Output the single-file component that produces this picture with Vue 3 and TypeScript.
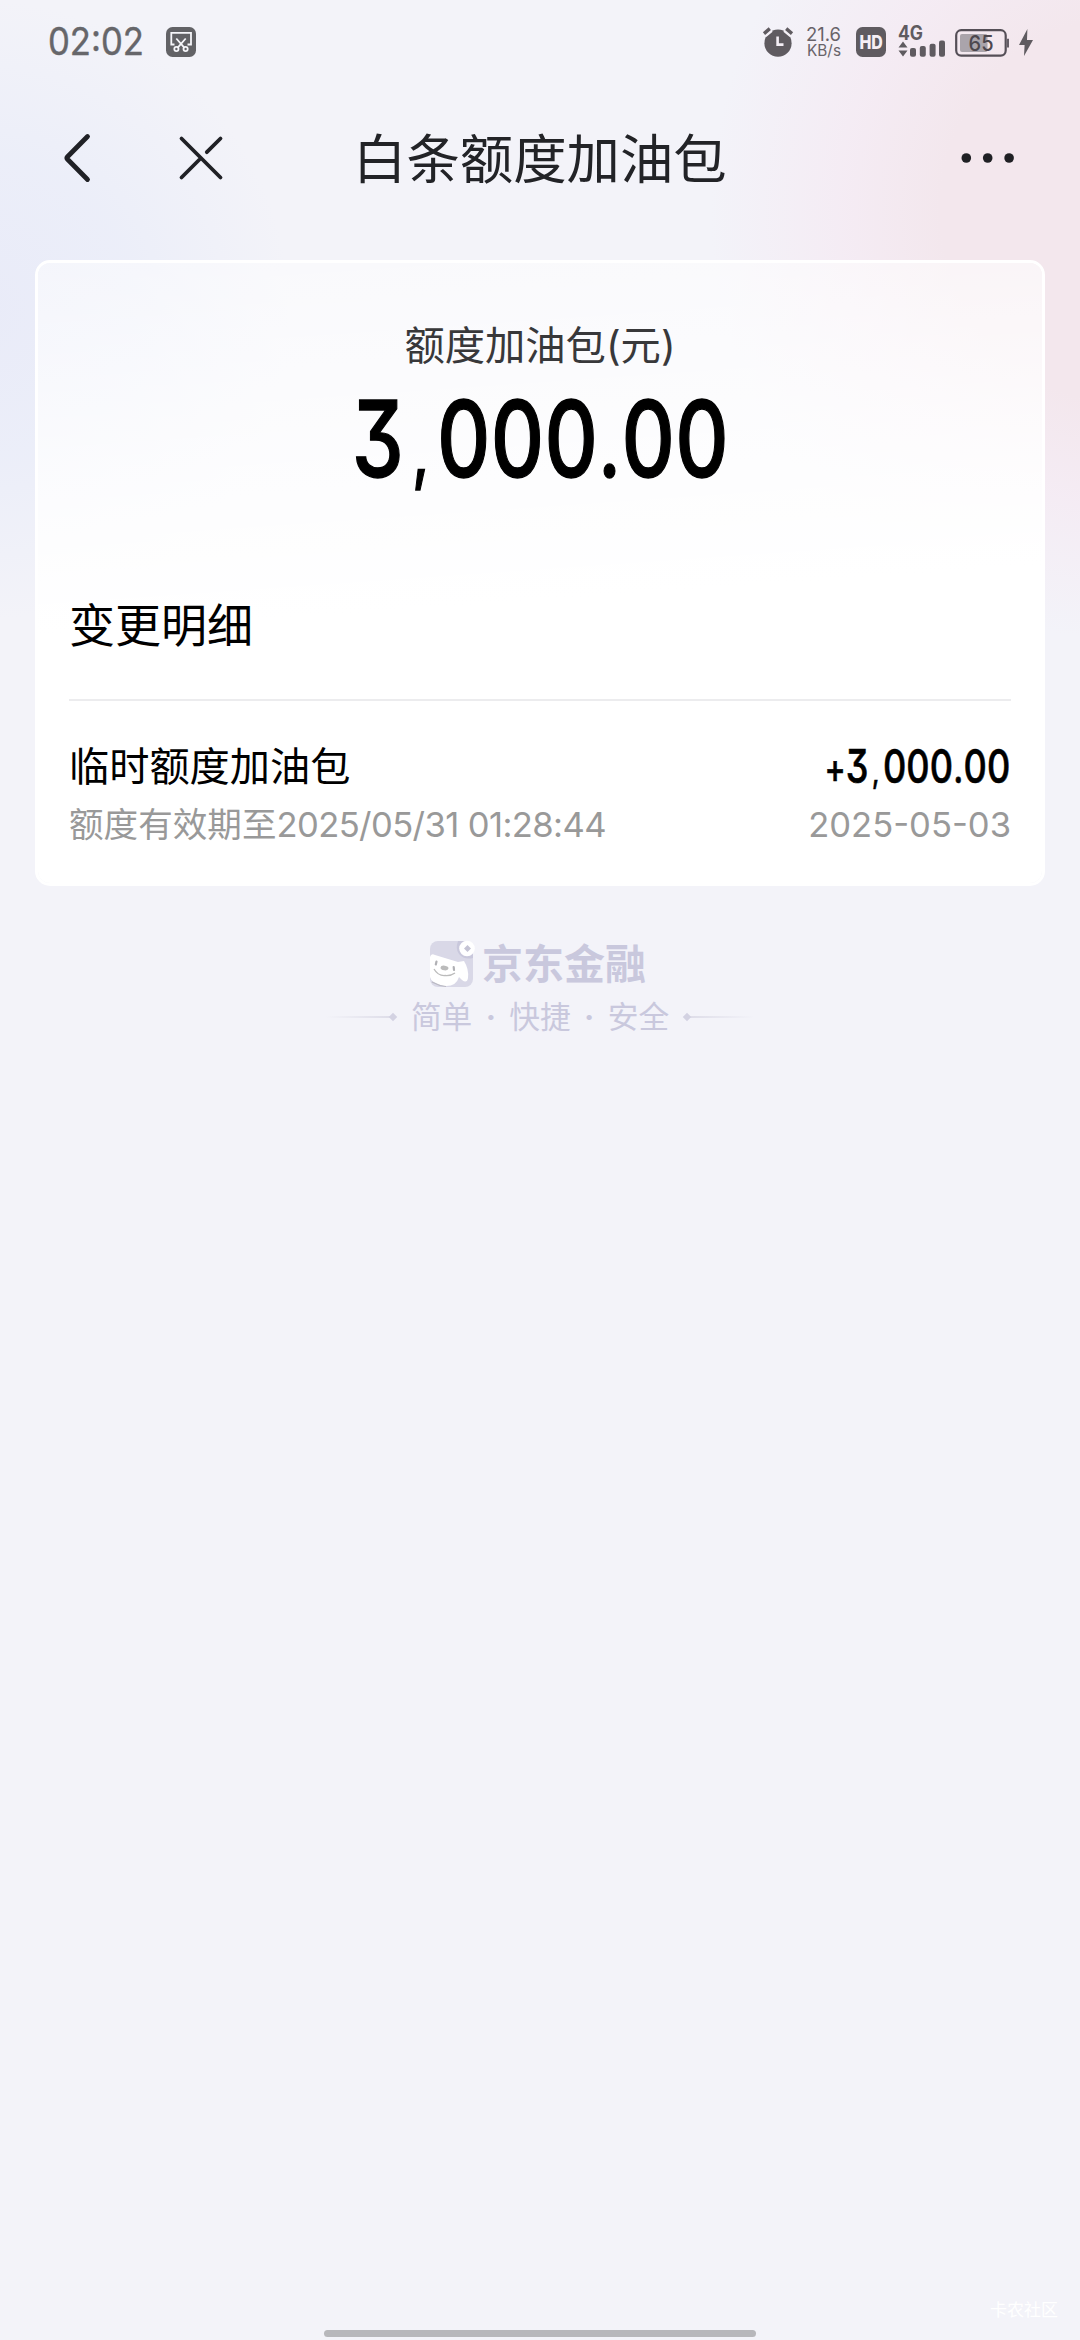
<script setup lang="ts">
interface Change {
  name: string
  until: string
  amount: string
  date: string
}
interface Glyph {
  char: string
  x: number
  size: number
}

/** Narrow numerals: each character is centred in its own slot, then the row is condensed. */
const CONDENSE = 0.78
const slots: Record<string, [number, number]> = {
  ',': [0.302, 0.68],
  '.': [0.22, 0.92],
  '+': [0.44, 0.88],
}
function layout(value: string, size: number): Glyph[] {
  let left = 0
  return [...value].map((char) => {
    const [width, ratio] = slots[char] ?? [0.507, 1]
    const x = left + (width * size) / 2
    left += width * size
    return { char, x: x / CONDENSE, size: size * ratio }
  })
}

const title = '白条额度加油包'
const total = layout('3,000.00', 106)
const changes: Change[] = [
  { name: '临时额度加油包', until: '2025/05/31 01:28:44', amount: '+3,000.00', date: '2025-05-03' },
]
const mottos = ['简单', '快捷', '安全']
</script>

<template>
  <div class="screen">
    <header class="status">
      <div class="status-left">
        <svg class="clock" width="96" height="32" viewBox="0 0 96 32">
          <text x="0" y="29" textLength="96" lengthAdjust="spacingAndGlyphs">02:02</text>
        </svg>
        <svg width="30" height="30" viewBox="0 0 30 30">
          <rect width="30" height="30" rx="6.5" fill="#626266" />
          <g fill="none" stroke="#f6f6fa" stroke-width="1.8">
            <path d="M8.5 17.5H5.3V5.8H25V17.5H21.5" />
            <path d="M10.3 11.5L18.5 20.8M19.7 11.5L11.5 20.8" />
            <circle cx="10.4" cy="22" r="2.1" />
            <circle cx="19.6" cy="22" r="2.1" />
          </g>
        </svg>
      </div>
      <div class="status-right">
        <svg width="30" height="30" viewBox="0 0 30 30">
          <circle cx="15" cy="16.2" r="13.6" fill="#5f5b60" />
          <path d="M1 7.4L7.4 2M29 7.4L22.6 2" stroke="#f4f0f6" stroke-width="7" />
          <path d="M1 6.6L6.8 1.6M29 6.6L23.2 1.6" stroke="#5f5b60" stroke-width="3.4" />
          <path d="M14.6 9.5V17.6H20.5" fill="none" stroke="#f4eef5" stroke-width="2.6" />
        </svg>
        <svg class="speed" width="36" height="32" viewBox="0 0 36 32">
          <text x="0" y="14.5" font-size="19" textLength="35" lengthAdjust="spacingAndGlyphs">21.6</text>
          <text x="1" y="30" font-size="15.5" textLength="34" lengthAdjust="spacingAndGlyphs">KB/s</text>
        </svg>
        <svg class="hd" width="30" height="30" viewBox="0 0 30 30">
          <rect width="30" height="30" rx="6.5" fill="#5f5b60" />
          <text x="3.4" y="21.8" textLength="23.4" lengthAdjust="spacingAndGlyphs">HD</text>
        </svg>
        <svg class="signal" width="48" height="32" viewBox="0 0 48 32">
          <text x="0" y="14.3" textLength="25" lengthAdjust="spacingAndGlyphs">4G</text>
          <path d="M0.5 21.5L5 15.5L9.5 21.5ZM0.5 24.4L5 30.4L9.5 24.4Z" />
          <rect x="12" y="22" width="6" height="8.8" rx="2" />
          <rect x="21.8" y="20" width="6" height="10.8" rx="2" />
          <rect x="31.6" y="17.8" width="6" height="13" rx="2" />
          <rect x="41" y="14.6" width="6" height="16.2" rx="2" />
        </svg>
        <svg class="battery" width="55" height="28" viewBox="0 0 55 28">
          <rect x="1.2" y="1.2" width="49.5" height="25.4" rx="5" fill="none" stroke="#554f57" stroke-width="2.2" />
          <rect x="5" y="5" width="27.5" height="18" rx="2" fill="#aaa4ab" />
          <path d="M53 9.8V18.4" stroke="#554f57" stroke-width="1.8" />
          <text x="13.6" y="21.6" textLength="25" lengthAdjust="spacingAndGlyphs">65</text>
        </svg>
        <svg class="bolt" width="14" height="28" viewBox="0 0 14 28">
          <path d="M8.4 0L0 16H5.6L5 27L14 11H8Z" fill="#5f5b60" />
        </svg>
      </div>
    </header>

    <nav class="nav">
      <svg width="32" height="54" viewBox="0 0 32 54">
        <path d="M26.5 5.5L6.5 25.7Q5.3 27 6.5 28.3L26.5 48.5" fill="none" stroke="#202126" stroke-width="4.8" stroke-linecap="round" stroke-linejoin="round" />
      </svg>
      <svg class="close" width="46" height="46" viewBox="0 0 46 46">
        <path d="M3.5 3.5L42.5 42.5M42.5 3.5L28.8 17.2M23 23L3.5 42.5" fill="none" stroke="#202126" stroke-width="3.8" stroke-linecap="round" />
      </svg>
      <h1>{{ title }}</h1>
      <svg class="more" width="54" height="12" viewBox="0 0 54 12" fill="#1f2024">
        <circle cx="5.3" cy="6" r="4.8" />
        <circle cx="26.7" cy="6" r="4.8" />
        <circle cx="48.1" cy="6" r="4.8" />
      </svg>
    </nav>

    <main class="card">
      <p class="label">额度加油包(元)</p>
      <svg class="total figure" width="378" height="100" viewBox="0 0 378 100">
        <text y="84" :transform="`scale(${CONDENSE} 1)`"><tspan v-for="(g, i) in total" :key="i" :x="g.x" :font-size="g.size">{{ g.char }}</tspan></text>
      </svg>
      <h2>变更明细</h2>
      <section v-for="c in changes" :key="c.date" class="change">
        <div class="row">
          <span class="name">{{ c.name }}</span>
          <svg class="amount figure" width="186" height="48" viewBox="0 0 186 48">
            <text y="40" :transform="`scale(${CONDENSE} 1)`"><tspan v-for="(g, i) in layout(c.amount, 46.3)" :key="i" :x="g.x" :font-size="g.size">{{ g.char }}</tspan></text>
          </svg>
        </div>
        <div class="row sub">
          <span>额度有效期至<span class="until">{{ c.until }}</span></span>
          <span class="date">{{ c.date }}</span>
        </div>
      </section>
    </main>

    <footer class="brand">
      <div class="logo">
        <svg width="46" height="48" viewBox="0 0 46 48">
          <rect x="1" y="1" width="43" height="46" rx="8" fill="#d9d8e7" />
          <path d="M1 17Q2 13 6 15L29 22L35 21Q40 29 39 38Q38 44 33 40L30 37Q27 47 15 46Q2 43 1 37Z" fill="#fff" />
          <path d="M29 1Q26 9 30 14Q35 20 44 18V8Q43 2 36 1Z" fill="#c9c8dc" />
          <circle cx="38" cy="8.5" r="7.8" fill="#fff" />
          <path d="M38.5 5L42 8.5L38.5 12L35 8.5Z" fill="#c4c3d4" />
          <ellipse cx="15.5" cy="28" rx="4" ry="2.3" fill="#bbb" transform="rotate(8 15.5 28)" />
          <path d="M7.5 21.5L6.8 24.5M24.7 27L25 30" stroke="#b0b0b4" stroke-width="2.2" stroke-linecap="round" />
          <path d="M5 29Q9 36 16 35.5Q22 36 26 33" fill="none" stroke="#bbb" stroke-width="1.3" />
          <path d="M3 42Q10 46 17 46.5" fill="none" stroke="#bab9c2" stroke-width="1.2" />
        </svg>
        <strong>京东金融</strong>
      </div>
      <div class="motto">
        <span class="rule"></span>
        <span class="words">
          <template v-for="(m, i) in mottos" :key="m"><b v-if="i">·</b><span>{{ m }}</span></template>
        </span>
        <span class="rule right"></span>
      </div>
    </footer>

    <div class="bottom">
      <span class="mark">卡农社区</span>
      <span class="home"></span>
    </div>
  </div>
</template>

<style>
body {
  background: #f3f3f9;
}
</style>

<style scoped>
.screen {
  width: 1080px;
  height: 2340px;
  display: flex;
  flex-direction: column;
  overflow: hidden;
  font-family: Inter, 'Noto Sans CJK SC', sans-serif;
  background:
    radial-gradient(ellipse 310px 310px at -20px 310px, #e9ebf8 0%, rgba(234, 237, 249, 0.8) 50%, rgba(243, 243, 249, 0) 100%),
    radial-gradient(ellipse 420px 430px at 1130px 210px, #f3e7ed 0%, #f3e7ed 45%, rgba(245, 233, 242, 0.75) 68%, rgba(243, 243, 249, 0) 100%),
    #f3f3f9;
}
svg {
  display: block;
  flex: none;
  overflow: visible;
}
.status {
  height: 84px;
  padding: 0 47px 0 48px;
  display: flex;
  align-items: center;
  justify-content: space-between;
}
.status-left,
.status-right {
  display: flex;
  align-items: center;
}
.status-left {
  gap: 22px;
}
.clock text {
  font-size: 37.5px;
  fill: #66666a;
  stroke: #66666a;
  stroke-width: 0.4px;
}
.speed {
  margin-left: 13px;
}
.speed text {
  fill: #686369;
}
.hd {
  margin-left: 14px;
}
.hd text {
  font-size: 19px;
  font-weight: 800;
  fill: #f5eff5;
}
.signal {
  margin-left: 12px;
  fill: #5f5b60;
}
.signal text {
  font-size: 19.5px;
  font-weight: 700;
}
.battery {
  margin: 2px 0 0 9px;
}
.battery text {
  font-size: 22px;
  font-weight: 500;
  fill: #4d474e;
}
.bolt {
  margin: 2px 0 0 9px;
}
.nav {
  height: 148px;
  padding: 0 65px 0 61px;
  display: flex;
  align-items: center;
  margin-bottom: 28px;
}
.close {
  margin-left: 85px;
}
h1 {
  margin: 4px 0 0 129px;
  font-size: 53.4px;
  line-height: 60px;
  font-weight: 400;
  color: #222327;
  white-space: nowrap;
}
.more {
  margin-left: auto;
}
.card {
  box-sizing: border-box;
  width: 1010px;
  height: 626px;
  margin: 0 35px;
  padding: 0 31px;
  border: 3px solid #fff;
  border-radius: 15px;
  background: linear-gradient(176deg, rgba(255, 255, 255, 0.5) 0%, #fff 54%);
  background-clip: padding-box;
  display: flex;
  flex-direction: column;
}
.label {
  margin: 58px 0 0;
  font-size: 40.3px;
  line-height: 50px;
  text-align: center;
  color: #38383a;
}
.figure text {
  font-weight: 500;
  text-anchor: middle;
  font-feature-settings: 'cv09';
  stroke: #000;
}
.total {
  align-self: center;
  margin-top: 22px;
}
.total text {
  stroke-width: 1.3px;
}
h2 {
  margin: 107px 0 0;
  font-size: 46px;
  line-height: 50px;
  font-weight: 400;
  height: 99px;
  border-bottom: 2px solid #ececee;
}
.change {
  padding-top: 42px;
}
.row {
  display: flex;
  justify-content: space-between;
  align-items: center;
  height: 48px;
}
.name {
  font-size: 40.2px;
  line-height: 48px;
}
.amount text {
  stroke-width: 0.6px;
}
.sub {
  margin-top: 9px;
  color: #999;
  font-size: 34.6px;
  line-height: 48px;
}
.until {
  letter-spacing: -0.6px;
}
.brand {
  margin-top: 54px;
  display: flex;
  flex-direction: column;
  align-items: center;
  color: #c9c8dd;
}
.logo {
  display: flex;
  align-items: center;
  height: 48px;
  gap: 7px;
  padding-right: 5px;
}
.logo strong {
  font-size: 41px;
  line-height: 48px;
  font-weight: 700;
}
.motto {
  display: flex;
  align-items: center;
  margin-top: 5px;
  height: 48px;
  gap: 15px;
}
.words {
  display: flex;
  font-size: 30.7px;
  line-height: 48px;
}
.words b {
  width: 37px;
  text-align: center;
}
.rule {
  width: 70px;
  height: 2px;
  display: flex;
  align-items: center;
  justify-content: flex-end;
  background: linear-gradient(90deg, rgba(217, 216, 229, 0), #dcdbe7);
}
.rule::after {
  content: '';
  width: 6px;
  height: 6px;
  flex: none;
  background: #d3d2e2;
  transform: rotate(45deg);
}
.rule.right {
  transform: scaleX(-1);
}
.bottom {
  margin-top: auto;
  display: flex;
  flex-direction: column;
  align-items: center;
  padding-bottom: 3px;
}
.mark {
  align-self: flex-end;
  margin: 0 22px 8px 0;
  font-size: 17px;
  line-height: 24px;
  color: #fff;
}
.home {
  width: 432px;
  height: 7px;
  border-radius: 4px;
  background: #b7b7bb;
}
</style>
